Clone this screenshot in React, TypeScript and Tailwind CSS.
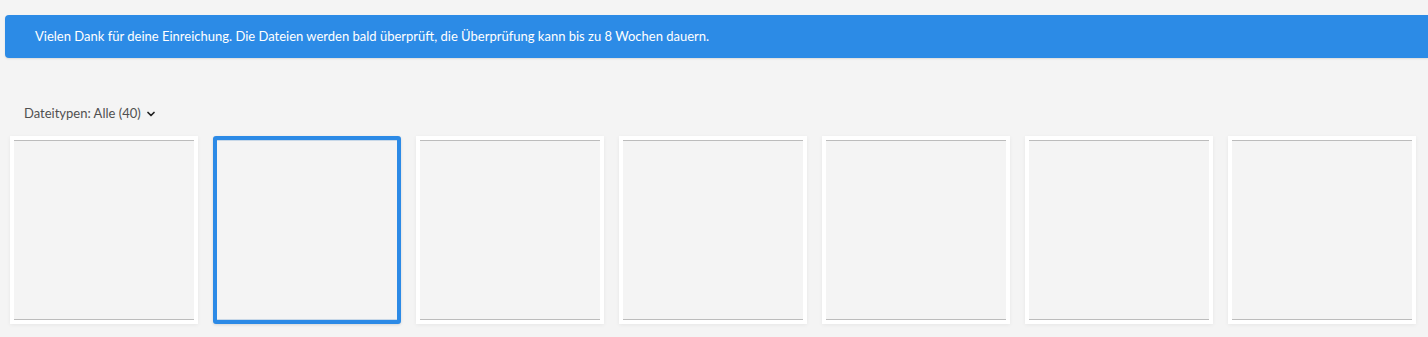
import { FiChevronDown } from 'react-icons/fi';

const cards = [0, 1, 2, 3, 4, 5, 6];

function Card({ selected }: { selected?: boolean }) {
  if (selected) {
    return (
      <div className="w-[188px] h-[188px] rounded-[3px] border-4 border-[#2c8ae6] bg-[#f4f4f4] shadow-[0_1px_3px_rgba(0,0,0,0.12)]">
        <div className="h-full border-t border-b border-[#c8d8e8] bg-[#f4f4f4]" />
      </div>
    );
  }
  return (
    <div className="w-[188px] h-[188px] bg-white p-1 shadow-[0_1px_4px_rgba(0,0,0,0.06)]">
      <div className="h-full border-t border-b border-[#bcbcbc] bg-[#f4f4f4]" />
    </div>
  );
}

export default function App() {
  return (
    <div
      className="w-[1428px] h-[337px] bg-[#f4f4f4] pt-[15px] overflow-hidden"
      style={{ fontFamily: 'Lato, "Open Sans", sans-serif' }}
    >
      <div className="ml-[5px] h-[43px] flex items-center rounded-l-[4px] bg-[#2c8be6] pl-[30px] text-[13px] text-white shadow-[0_1px_2px_rgba(0,0,0,0.1)]">
        Vielen Dank für deine Einreichung. Die Dateien werden bald überprüft, die Überprüfung kann bis zu 8 Wochen dauern.
      </div>

      <div className="mt-[44px] ml-[24px] h-[24px] flex items-center gap-[4px] text-[13px] text-[#505050]">
        <span>Dateitypen: Alle (40)</span>
        <FiChevronDown className="w-[12px] h-[12px] text-[#222] stroke-[3.5]" />
      </div>

      <div className="mt-[10px] ml-[10px] flex gap-[15px]">
        {cards.map((i) => (
          <Card key={i} selected={i === 1} />
        ))}
      </div>
    </div>
  );
}
